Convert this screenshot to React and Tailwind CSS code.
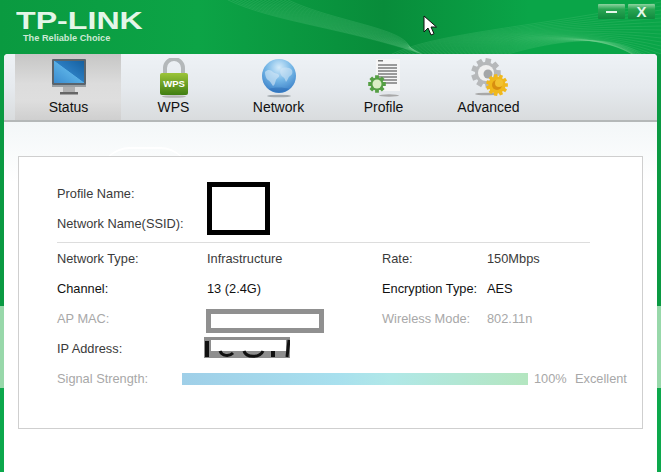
import React from "react";

const FONT = "font-['Liberation_Sans',Arial,sans-serif]";

// builds a toothed wheel outline for the Profile and Advanced icons
function gearPath(cx, cy, outer, inner, teeth) {
    const pts = [];
    const step = (Math.PI * 2) / teeth;
    for (let i = 0; i < teeth; i++) {
        const a = i * step;
        [
            [a - step * 0.27, outer],
            [a + step * 0.27, outer],
            [a + step * 0.38, inner],
            [a + step * 0.62, inner],
        ].forEach(([ang, r]) => {
            pts.push(`${(cx + Math.cos(ang) * r).toFixed(2)} ${(cy + Math.sin(ang) * r).toFixed(2)}`);
        });
    }
    return `M${pts.join("L")}Z`;
}

function MonitorIcon() {
    return (
        <svg width="40" height="40" viewBox="0 0 40 40">
            <defs>
                <linearGradient id="mon" x1="0" y1="1" x2="1" y2="0">
                    <stop offset="0" stopColor="#3a8cd0" />
                    <stop offset="0.5" stopColor="#58aee4" />
                    <stop offset="0.52" stopColor="#2a7cc0" />
                    <stop offset="1" stopColor="#16609f" />
                </linearGradient>
            </defs>
            <rect x="3" y="1" width="34" height="26" rx="1" fill="#5a646c" />
            <rect x="5" y="3" width="30" height="22" fill="url(#mon)" />
            <rect x="3" y="27" width="34" height="2" fill="#9a9fa2" />
            <rect x="14" y="29" width="12" height="5" fill="#b0b0b0" />
            <rect x="11" y="34" width="18" height="2.5" fill="#666" />
        </svg>
    );
}

function LockIcon() {
    return (
        <svg width="32" height="40" viewBox="0 0 32 40">
            <defs>
                <linearGradient id="lockb" x1="0" y1="0" x2="0" y2="1">
                    <stop offset="0" stopColor="#9cc438" />
                    <stop offset="1" stopColor="#3f7e12" />
                </linearGradient>
            </defs>
            <path d="M7 17V10a9 9 0 0 1 18 0v7" fill="none" stroke="#b4b8ba" strokeWidth="4" />
            <rect x="2" y="15" width="28" height="22" rx="2" fill="url(#lockb)" />
            <text x="16" y="29" textAnchor="middle" fontFamily="Liberation Sans" fontWeight="700" fontSize="9.5" fill="#fff">
                WPS
            </text>
            <ellipse cx="16" cy="38.5" rx="12" ry="1.3" fill="#b4b4b4" />
        </svg>
    );
}

function GlobeIcon() {
    return (
        <svg width="36" height="40" viewBox="0 0 36 40">
            <defs>
                <radialGradient id="globe" cx="0.5" cy="0.25" r="0.85">
                    <stop offset="0" stopColor="#d4ebfa" />
                    <stop offset="0.45" stopColor="#74b6e6" />
                    <stop offset="1" stopColor="#2a70bf" />
                </radialGradient>
            </defs>
            <circle cx="18" cy="18" r="17" fill="url(#globe)" />
            {/* land masses, paler than the sea */}
            <path d="M4 14c3-3 6-2 8 0s5 1 6 3-2 3-3 5-1 5-3 6c-2-3-3-5-5-6s-3-5-3-8z" fill="#d6e8f6" opacity="0.6" />
            <path d="M20 11c3-2 8-2 11 1 1 3 0 5-2 6s-2 4-4 6c-1-2-1-4-3-5s-4-5-2-8z" fill="#d6e8f6" opacity="0.55" />
            <path d="M8 31c4-2 15-2 20 0a17 17 0 0 1-20 0z" fill="#1c5ca8" opacity="0.35" />
            <ellipse cx="18" cy="38" rx="12" ry="1.3" fill="#a4aaaf" />
        </svg>
    );
}

function ProfileIcon() {
    return (
        <svg width="34" height="40" viewBox="0 0 34 40">
            <rect x="9" y="1" width="24" height="32" fill="#f6f6f6" />
            {[6, 9, 12, 15, 18, 21, 24].map((y) => (
                <rect key={y} x="11" y={y} width="19" height="2" fill="#9a9a9a" />
            ))}
            <rect x="11" y="2" width="5" height="1.5" fill="#777" />
            <ellipse cx="22" cy="37.5" rx="10" ry="1.2" fill="#a8a8a8" />
            <path d={gearPath(10, 26, 9, 6.5, 8)} fill="#559f44" />
            <circle cx="10" cy="26" r="4.5" fill="#dcefc6" />
        </svg>
    );
}

function AdvancedIcon() {
    return (
        <svg width="40" height="40" viewBox="0 0 40 40">
            <path d={gearPath(17, 15, 15, 11, 9)} fill="#b6b8ba" />
            <circle cx="17" cy="15" r="8" fill="#f0f0f0" />
            <circle cx="19" cy="16" r="4.5" fill="#a4a6a8" />
            <ellipse cx="17" cy="36" rx="11" ry="1.3" fill="#a8a8a8" />
            <path d={gearPath(28, 27, 11, 8.5, 11)} fill="#f0b81c" />
            <circle cx="28" cy="27" r="5" fill="#d88e10" />
            <circle cx="30" cy="25" r="4" fill="#f2c230" />
        </svg>
    );
}

// thin pale lines across the header, two crossing fans
function HeaderSwirl() {
    const fanA = Array.from({ length: 16 }, (_, i) => i * 4);
    const fanB = Array.from({ length: 30 }, (_, i) => i * 5);
    return (
        <svg className="absolute inset-0" width="661" height="54" viewBox="0 0 661 54">
            {fanA.map((d) => (
                <path key={d} d={`M${228 + d} 0C${275 + d} 22 ${345 + d} 28 ${422 - d * 0.2} ${54 - d * 0.1}`} fill="none" stroke="#7fd49a" strokeOpacity="0.3" strokeWidth="0.6" />
            ))}
            {fanB.map((d) => (
                <path key={d} d={`M${392 + d * 0.8} 54C${440 + d} 32 ${530 + d} 28 ${661} ${2 + d * 0.8}`} fill="none" stroke="#7fd49a" strokeOpacity="0.28" strokeWidth="0.6" />
            ))}
        </svg>
    );
}

const tabs = [
    { label: "Status", icon: <MonitorIcon />, active: true },
    { label: "WPS", icon: <LockIcon /> },
    { label: "Network", icon: <GlobeIcon /> },
    { label: "Profile", icon: <ProfileIcon /> },
    { label: "Advanced", icon: <AdvancedIcon /> },
];

function Row({ children }) {
    return <div className="grid h-[30px] grid-cols-[150px_175px_105px_1fr] items-center">{children}</div>;
}

export default function App() {
    return (
        <div className={`${FONT} flex h-[472px] w-full flex-col overflow-hidden bg-[linear-gradient(to_bottom,#0a9a42_306px,#98d8aa_306px,#98d8aa_388px,#0ca84c_388px)]`}>
            {/* title bar */}
            <div className="relative flex h-[54px] shrink-0 items-start justify-between overflow-hidden bg-[linear-gradient(90deg,#0a9a40_0%,#0ca446_30%,#088c3a_58%,#0aa548_80%,#0aa548_100%)] pr-[6px] pt-[4px]">
                <HeaderSwirl />
                <div className="relative ml-[16px] mt-[5px]">
                    <div className="origin-left scale-x-[1.34] text-[24px] font-bold leading-[24px] text-[#e4f6e8]">TP-LINK</div>
                    <div className="ml-[7px] text-[9.2px] font-bold leading-[10px] text-[#cbe9d4]">The Reliable Choice</div>
                </div>
                <div className="relative flex gap-[3px]">
                    <button className="flex h-[15px] w-[27px] items-center justify-center rounded-[1px] bg-[linear-gradient(to_bottom,#8ed4a0,#2aa553_35%,#108a3e)]">
                        <span className="h-[2px] w-[11px] bg-[#e6f6ea]" />
                    </button>
                    <button className="flex h-[15px] w-[27px] items-center justify-center rounded-[1px] bg-[linear-gradient(to_bottom,#8ed4a0,#2aa553_35%,#108a3e)] text-[15px] font-bold leading-none text-[#e6f6ea]">
                        X
                    </button>
                </div>
                {/* mouse cursor from the capture */}
                <svg className="absolute left-[423px] top-[15px]" width="14" height="21" viewBox="0 0 14 21">
                    <path d="M1 1v16l4-4 3 7 3-1.300-3-6.700h5.500z" fill="#fff" stroke="#111" strokeWidth="1" />
                </svg>
            </div>

            {/* main panel */}
            <div className="mx-[4px] flex flex-1 flex-col overflow-hidden rounded-t-[4px] bg-white">
                <div className="flex h-[68px] shrink-0 border-b-2 border-[#b4b8b8] bg-[linear-gradient(to_bottom,#eef2f6,#e6eaee_50%,#d9dcde)] pl-[11px]">
                    {tabs.map((tab) => (
                        <div
                            key={tab.label}
                            className={`flex flex-col items-center pt-[4px] text-[14px] leading-[16px] text-[#111] ${
                                tab.active
                                    ? "-mr-px w-[106px] bg-[linear-gradient(to_bottom,#c6c6c5,#dcdcdc_45%,#dedede_70%,#cfcfcf)] pl-[1px]"
                                    : "w-[105px] pl-[2px]"
                            }`}
                        >
                            <div className="flex h-[41px] items-start justify-center">{tab.icon}</div>
                            <div>{tab.label}</div>
                        </div>
                    ))}
                </div>

                <div className="relative flex-1 bg-[linear-gradient(to_bottom,#f3f7f8,#ffffff_60px)] pl-[14px] pr-[14px] pt-[34px]">
                    {/* faint watermark arc behind the card */}
                    <div className="absolute left-[96px] top-[25px] h-[60px] w-[90px] rounded-full border-t-2 border-white" />
                    <div className="relative h-[273px] border border-[#cfcfcf] bg-white pl-[38px] pt-[21px] text-[12.8px] text-[#3a3a3a]">
                        <div className="grid h-[60px] grid-cols-[150px_1fr] grid-rows-2 items-center">
                            <div className="pt-[2px]">Profile Name:</div>
                            <div className="row-span-2 h-[53px] w-[63px] self-center border-[5px] border-black bg-white" />
                            <div className="pt-[2px]">Network Name(SSID):</div>
                        </div>
                        <div className="mb-[1px] mt-[4px] h-px w-[533px] bg-[#dddddd]" />
                        <Row>
                            <div>Network Type:</div>
                            <div>Infrastructure</div>
                            <div>Rate:</div>
                            <div>150Mbps</div>
                        </Row>
                        <Row>
                            <div className="text-[#111]">Channel:</div>
                            <div className="text-[#111]">13 (2.4G)</div>
                            <div className="text-[#111]">Encryption Type:</div>
                            <div className="text-[#111]">AES</div>
                        </Row>
                        <Row>
                            <div className="text-[#a8a8a8]">AP MAC:</div>
                            <div className="-ml-px mt-[4px] h-[24px] w-[118px] border-[5px] border-[#909090] bg-white" />
                            <div className="text-[#a8a8a8]">Wireless Mode:</div>
                            <div className="text-[#a8a8a8]">802.11n</div>
                        </Row>
                        <Row>
                            <div>IP Address:</div>
                            {/* scribbled-out value, only remnants of the strokes show */}
                            <svg className="-ml-[3px] -mt-[3px]" width="86" height="21" viewBox="0 0 86 21">
                                <rect width="86" height="21" fill="#8e8e8e" />
                                <rect x="7" y="3" width="75" height="11" fill="#fff" />
                                <rect x="1" y="4" width="4" height="16" fill="#111" />
                                <path d="M16 14c2 5 9 6 13 2M40 14c2 7 16 7 19 0" fill="none" stroke="#111" strokeWidth="3" />
                                <rect x="67" y="14" width="4" height="6" fill="#111" />
                                <path d="M85 3l-2 17" stroke="#111" strokeWidth="3" />
                            </svg>
                            <div />
                            <div />
                        </Row>
                        <div className="flex h-[30px] items-center text-[#a8a8a8]">
                            <div className="w-[125px]">Signal Strength:</div>
                            <div className="h-[12px] w-[346px] bg-[linear-gradient(90deg,#9fcfe8,#a8e0ee_45%,#b0e8e8_60%,#b4e6c0)]" />
                            <div className="ml-[6px] w-[41px]">100%</div>
                            <div>Excellent</div>
                        </div>
                    </div>
                </div>
            </div>
        </div>
    );
}
